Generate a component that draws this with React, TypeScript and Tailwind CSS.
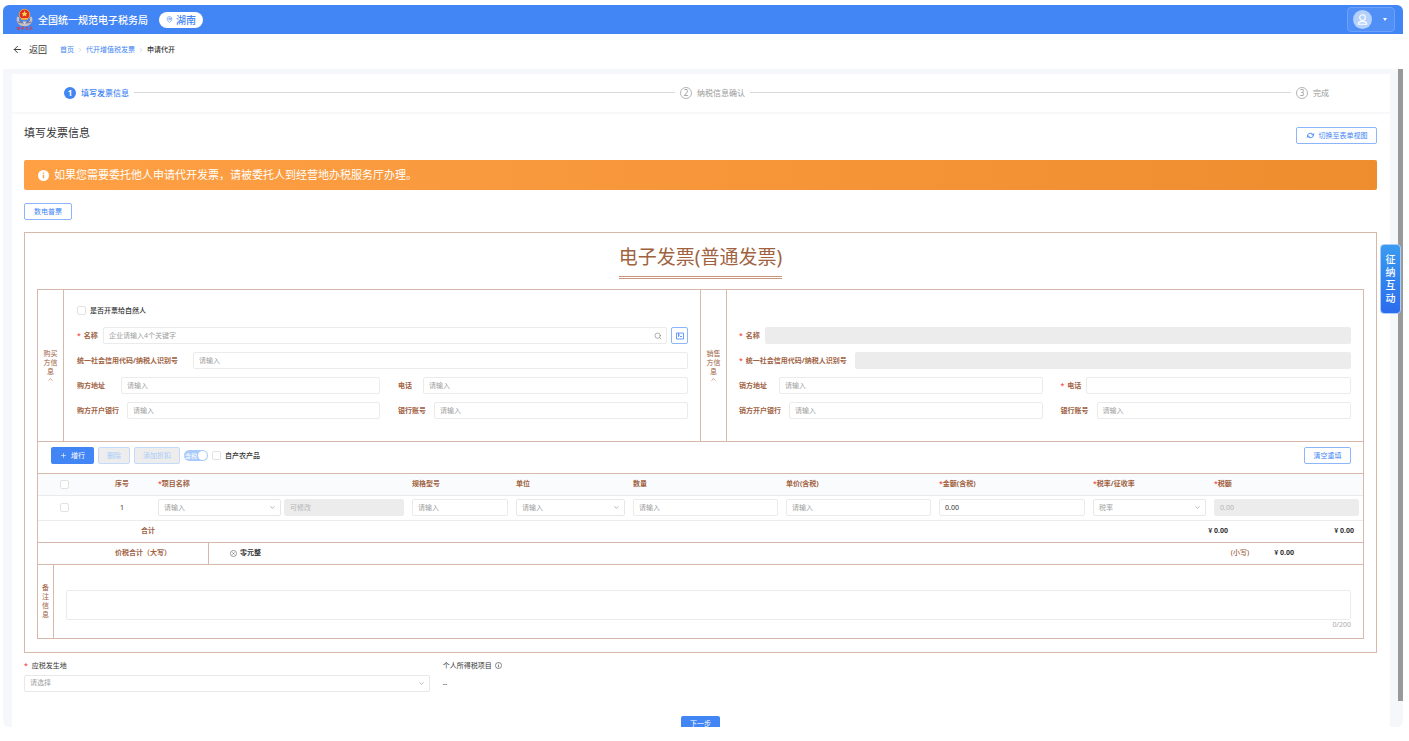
import type { InputHTMLAttributes, ReactNode } from "react";
import { ArrowLeft, ChevronDown, ChevronRight, ChevronUp, MapPin, Plus, Search } from "lucide-react";

const inputBase =
  "h-[17px] min-w-0 rounded-xs border border-[#ebebeb] bg-white px-[5px] font-normal text-[#333] outline-none placeholder:text-[#a0a0a0] disabled:border-[#ececec] disabled:bg-[#ececec] disabled:placeholder:text-[#b5b5b5]";

const outlineButton =
  "flex h-[17px] shrink-0 items-center justify-center rounded-xs border border-[#8db6fa] bg-white text-[#4285f4]";

const disabledButton =
  "flex h-[17px] items-center justify-center rounded-xs border border-[#c5daf8] bg-[#ededed] text-[#a9cbfa]";

function Required() {
  return <span className="font-normal text-[#f5222d]">*</span>;
}

interface FieldProps extends InputHTMLAttributes<HTMLInputElement> {
  label: string;
  labelWidth: string;
  required?: boolean;
  suffix?: ReactNode;
}

function Field({ label, labelWidth, required, suffix, ...rest }: FieldProps) {
  return (
    <div className="flex min-w-0 flex-1 items-center gap-1">
      <label className="relative flex min-w-0 flex-1 items-center">
        <span className={`flex shrink-0 gap-[3px] whitespace-nowrap font-bold text-[#a0623f] ${labelWidth}`}>
          {required && <Required />}
          {label}
        </span>
        <input type="text" className={`${inputBase} flex-1`} {...rest} />
        {suffix && <Search className="absolute right-[5px] size-2 text-[#888]" strokeWidth={2} />}
      </label>
      {suffix}
    </div>
  );
}

function SelectBox({ label, placeholder }: { label: string; placeholder: string }) {
  return (
    <div className="relative flex min-w-0 flex-1 items-center">
      <select
        aria-label={label}
        className="h-[17px] w-full appearance-none rounded-xs border border-[#e8e8e8] bg-white px-[5px] text-[#a0a0a0] outline-none"
      >
        <option>{placeholder}</option>
      </select>
      <ChevronDown className="pointer-events-none absolute right-[5px] size-[7px] text-[#888]" />
    </div>
  );
}

function Checkbox({ label, hideLabel }: { label: string; hideLabel?: boolean }) {
  return (
    <label className="flex items-center gap-1 font-medium text-[#333]">
      <input
        type="checkbox"
        aria-label={label}
        className="size-[9px] shrink-0 appearance-none rounded-xs border border-[#e2e2e2] bg-white checked:bg-[#4285f4]"
      />
      {!hideLabel && label}
    </label>
  );
}

function SideLabel({ text }: { text: string }) {
  return (
    <div className="flex w-[26px] shrink-0 flex-col items-center justify-center text-center text-[#a0623f]">
      <span className="w-[15px] leading-[9px]">{text}</span>
      <ChevronUp className="size-[7px]" />
    </div>
  );
}

function Emblem() {
  return (
    <svg viewBox="0 0 34 46" className="h-[23px] w-[17px]" aria-hidden="true">
      <path d="M5 18c-4 8 2 16 12 16s16-8 12-16" fill="none" stroke="#c9bfc0" strokeWidth="5" />
      <path d="M8 25c4 6 14 6 18 0M3 28l8 2M31 28l-8 2" fill="none" stroke="#7d7484" strokeWidth="2" />
      <circle cx="17" cy="13" r="10.5" fill="#e02d1c" stroke="#f2a13b" strokeWidth="2" />
      <path d="M17 5l2 5h4l-3 3 1 4-4-2-4 2 1-4-3-3h4z" fill="#ffd257" />
      <path d="M10 20h14v3H10z" fill="#f7b23c" />
      <path d="M13 27h8l-4 6z" fill="#e5d6c8" />
      <path
        d="M2 39h6v3H2zM5 37v8M11 38h5M11 41h6M13 38v6M20 38l4 6M24 38l-4 6M27 38h5M29 38v6M27 42h6"
        fill="none"
        stroke="#cf3f4c"
        strokeWidth="1.5"
      />
    </svg>
  );
}

function InfoIcon({ className }: { className: string }) {
  return (
    <svg viewBox="0 0 16 16" className={className} fill="none" stroke="currentColor" aria-hidden="true">
      <circle cx="8" cy="8" r="7" strokeWidth="1.3" />
      <path d="M8 7v5M8 4v1.5" strokeWidth="1.5" />
    </svg>
  );
}

function Header() {
  return (
    <header className="flex h-[29px] shrink-0 items-center bg-[#4285f5] pr-2 pl-[13px] text-white">
      <Emblem />
      <h1 className="ml-[5px] text-[10px] font-medium">全国统一规范电子税务局</h1>
      <button className="ml-[11px] flex h-4 w-11 items-center justify-center gap-[3px] rounded-full bg-white text-[10px] font-medium text-[#4285f4]">
        <MapPin className="size-[7px]" />
        湖南
      </button>
      <button
        aria-label="用户"
        className="ml-auto flex h-[25px] w-12 items-center gap-[11px] rounded-sm border border-[#6ba1f8] bg-[#5090f6] pl-[5px]"
      >
        <svg viewBox="0 0 20 20" className="size-[19px]" aria-hidden="true">
          <circle cx="10" cy="10" r="10" fill="#b4d1fc" />
          <g fill="none" stroke="#fff" strokeWidth="1.2">
            <circle cx="10" cy="8" r="3" />
            <path d="M5.500 15c0-4 9-4 9 0z" />
          </g>
        </svg>
        <svg viewBox="0 0 4 3" className="h-[3px] w-1" aria-hidden="true">
          <path d="M0 0h4L2 3z" fill="#fff" />
        </svg>
      </button>
    </header>
  );
}

function Breadcrumb() {
  return (
    <nav className="flex h-[35px] shrink-0 items-center bg-white pb-1 pl-[9px]">
      <button className="flex items-center gap-[6px] text-[9px] text-[#333]">
        <ArrowLeft className="size-[11px]" />
        返回
      </button>
      <ol className="ml-[13px] flex items-center gap-[3px]">
        <li><a href="#home" className="text-[#4285f4]">首页</a></li>
        <ChevronRight className="size-[6px] text-[#aaa]" />
        <li><a href="#list" className="text-[#4285f4]">代开增值税发票</a></li>
        <ChevronRight className="size-[6px] text-[#aaa]" />
        <li className="font-medium text-[#333]">申请代开</li>
      </ol>
    </nav>
  );
}

function Steps() {
  const line = <div className="h-px flex-1 bg-[#d8d8d8]" />;
  return (
    <ol className="flex h-10 items-center gap-[5px] border-b-2 border-[#f7f8fa] pr-[61px] pb-px pl-[52px] text-[8px] text-[#999]">
      <li className="flex items-center gap-[5px] font-medium text-[#4285f4]">
        <span className="flex size-[12px] items-center justify-center rounded-full bg-[#4285f4] font-bold text-white">1</span>
        填写发票信息
      </li>
      {line}
      <li className="flex items-center gap-[5px]">
        <span className="flex size-[12px] items-center justify-center rounded-full border border-[#b5b5b5]">2</span>
        纳税信息确认
      </li>
      {line}
      <li className="flex items-center gap-[5px]">
        <span className="flex size-[12px] items-center justify-center rounded-full border border-[#b5b5b5]">3</span>
        完成
      </li>
    </ol>
  );
}

function BuyerForm() {
  return (
    <div className="flex min-w-0 flex-1 flex-col gap-2 pt-3 pr-3 pb-[22px] pl-[13px]">
      <div className="flex h-[17px] items-center">
        <Checkbox label="是否开票给自然人" />
      </div>
      <Field
        label="名称"
        labelWidth="w-[26px]"
        required
        placeholder="企业请输入4个关键字"
        suffix={
          <button aria-label="选择企业" className={`${outlineButton} w-[17px]`}>
            <svg viewBox="0 0 16 16" className="size-2" fill="none" stroke="currentColor" strokeWidth="1.6" aria-hidden="true">
              <path d="M1 2h14v12H1zM5 2v8M8 9h4M5 6h3" />
            </svg>
          </button>
        }
      />
      <Field label="统一社会信用代码/纳税人识别号" labelWidth="w-[116px]" placeholder="请输入" />
      <div className="grid grid-cols-[303fr_290fr] gap-[18px]">
        <Field label="购方地址" labelWidth="w-11" placeholder="请输入" />
        <Field label="电话" labelWidth="w-[25px]" placeholder="请输入" />
      </div>
      <div className="grid grid-cols-[303fr_290fr] gap-[18px]">
        <Field label="购方开户银行" labelWidth="w-[50px]" placeholder="请输入" />
        <Field label="银行账号" labelWidth="w-9" placeholder="请输入" />
      </div>
    </div>
  );
}

function SellerForm() {
  return (
    <div className="flex min-w-0 flex-1 flex-col gap-2 px-3 pt-[37px] pb-[22px]">
      <Field label="名称" labelWidth="w-[26px]" required disabled />
      <Field label="统一社会信用代码/纳税人识别号" labelWidth="w-[116px]" required disabled />
      <div className="grid grid-cols-[303fr_290fr] gap-[18px]">
        <Field label="销方地址" labelWidth="w-10" placeholder="请输入" />
        <Field label="电话" labelWidth="w-[25px]" required />
      </div>
      <div className="grid grid-cols-[303fr_290fr] gap-[18px]">
        <Field label="销方开户银行" labelWidth="w-[50px]" placeholder="请输入" />
        <Field label="银行账号" labelWidth="w-9" placeholder="请输入" />
      </div>
    </div>
  );
}

function Toolbar() {
  return (
    <div className="flex items-start border-b border-[#d6b9aa] pt-[5px] pr-3 pb-[9px] pl-[13px]">
      <div className="flex items-center gap-1">
        <button className="flex h-[17px] w-[43px] items-center justify-center gap-1 rounded-xs bg-[#4285f4] text-white">
          <Plus className="size-[7px]" />
          增行
        </button>
        <button disabled className={`${disabledButton} w-8`}>删除</button>
        <button disabled className={`${disabledButton} w-[46px]`}>添加折扣</button>
        <label className="flex h-[11px] w-6 items-center justify-end gap-px rounded-full bg-[#a9cbfa] pr-px text-[6px] text-white">
          <input type="checkbox" role="switch" className="sr-only" defaultChecked disabled />
          <span>含税</span>
          <span className="size-[9px] shrink-0 rounded-full bg-white" />
        </label>
        <Checkbox label="自产农产品" />
      </div>
      <button className={`${outlineButton} ml-auto w-[47px]`}>清空重填</button>
    </div>
  );
}

const columns = [
  { title: "序号", width: "w-[64px]", center: true },
  { title: "项目名称", width: "w-[254px]", required: true },
  { title: "规格型号", width: "w-[104px]" },
  { title: "单位", width: "w-[117px]" },
  { title: "数量", width: "w-[153px]" },
  { title: "单价(含税)", width: "w-[153px]" },
  { title: "金额(含税)", width: "w-[154px]", required: true },
  { title: "税率/征收率", width: "w-[121px]", required: true },
  { title: "税额", width: "w-[153px]", required: true },
];

function ItemsTable() {
  const cell = "px-1";
  return (
    <table className="w-full table-fixed border-collapse">
      <thead>
        <tr className="h-[21px] border-b border-[#ebebeb] bg-[#fafbfd] text-left">
          <th className="w-[52px]">
            <div className="flex justify-center">
              <Checkbox label="全选" hideLabel />
            </div>
          </th>
          {columns.map((c) => (
            <th
              key={c.title}
              className={`px-1 font-bold text-[#a0623f] ${c.width} ${c.center ? "text-center" : ""}`}
            >
              {c.required && <Required />}
              {c.title}
            </th>
          ))}
        </tr>
      </thead>
      <tbody>
        <tr className="h-[25px] border-b border-[#ebebeb]">
          <td>
            <div className="flex justify-center">
              <Checkbox label="选择第1行" hideLabel />
            </div>
          </td>
          <td className="px-1 text-center">1</td>
          <td className={cell}>
            <div className="grid grid-cols-[123fr_120fr] gap-[3px]">
              <SelectBox label="项目名称" placeholder="请输入" />
              <input aria-label="项目别名" className={inputBase} placeholder="可修改" disabled />
            </div>
          </td>
          <td className={cell}>
            <input aria-label="规格型号" className={`${inputBase} block w-full`} placeholder="请输入" />
          </td>
          <td className={cell}>
            <SelectBox label="单位" placeholder="请输入" />
          </td>
          <td className={cell}>
            <input aria-label="数量" className={`${inputBase} block w-full`} placeholder="请输入" />
          </td>
          <td className={cell}>
            <input aria-label="单价(含税)" className={`${inputBase} block w-full`} placeholder="请输入" />
          </td>
          <td className={cell}>
            <input aria-label="金额(含税)" className={`${inputBase} block w-full`} defaultValue="0.00" />
          </td>
          <td className={cell}>
            <SelectBox label="税率/征收率" placeholder="税率" />
          </td>
          <td className={cell}>
            <input aria-label="税额" className={`${inputBase} block w-full`} placeholder="0.00" disabled />
          </td>
        </tr>
      </tbody>
    </table>
  );
}

function Totals() {
  return (
    <>
      <div className="flex h-[22px] items-center border-b border-[#d6b9aa] pr-[9px] font-bold text-[#333]">
        <span className="w-[220px] text-center text-[#a0623f]">合计</span>
        <span className="ml-auto">¥ 0.00</span>
        <span className="w-[126px] text-right">¥ 0.00</span>
      </div>
      <div className="flex h-[22px] items-center border-b border-[#d6b9aa] pr-[69px] font-bold text-[#333]">
        <span className="flex w-[171px] items-center justify-center self-stretch border-r border-[#d6b9aa] pl-10 text-[#a0623f]">
          价税合计（大写）
        </span>
        <span className="ml-[21px] flex items-center gap-[3px]">
          <svg viewBox="0 0 16 16" className="size-[7px]" fill="none" stroke="#666" strokeWidth="1.4" aria-hidden="true">
            <circle cx="8" cy="8" r="7" />
            <path d="M5.500 5.500l5 5M10.500 5.500l-5 5" />
          </svg>
          零元整
        </span>
        <span className="ml-auto font-medium text-[#a0623f]">(小写)</span>
        <span className="ml-[25px]">¥ 0.00</span>
      </div>
    </>
  );
}

function Invoice() {
  return (
    <section className="mt-3 flex flex-col items-stretch border border-[#d6b9aa] px-3 pt-[10px] pb-[13px]">
      <h3 className="mb-[10px] self-center border-b-3 border-double border-[#c9977c] pb-[5px] text-[19px] leading-7 text-[#a0623f]">
        电子发票(普通发票)
      </h3>
      <div className="border border-[#d6b9aa]">
        <div className="flex border-b border-[#d6b9aa]">
          <div className="flex min-w-0 flex-1 divide-x divide-[#d6b9aa] border-r border-[#d6b9aa]">
            <SideLabel text="购买方信息" />
            <BuyerForm />
          </div>
          <div className="flex min-w-0 flex-1 divide-x divide-[#d6b9aa]">
            <SideLabel text="销售方信息" />
            <SellerForm />
          </div>
        </div>
        <Toolbar />
        <ItemsTable />
        <Totals />
        <div className="flex">
          <label
            htmlFor="remark"
            className="flex w-4 shrink-0 items-center justify-center border-r border-[#d6b9aa] text-[#a0623f]"
          >
            <span className="w-[7px] leading-[9px]">备注信息</span>
          </label>
          <div className="flex-1 px-3 pt-[25px] pb-2 text-right text-[#aaa]">
            <textarea
              id="remark"
              className="block h-[30px] w-full resize-none rounded-xs border border-[#ebebeb] p-1 outline-none"
            />
            <div className="leading-[10px]">0/200</div>
          </div>
        </div>
      </div>
    </section>
  );
}

export default function App() {
  return (
    <div className="h-screen overflow-hidden bg-white pt-[5px] pr-[6px] pb-[14px] pl-[3px] font-['Noto_Sans','Noto_Sans_CJK_SC',sans-serif] text-[7px] leading-[10px] text-[#333]">
      <div className="relative flex h-full flex-col overflow-hidden rounded-md">
        <Header />
        <Breadcrumb />
        <div className="flex min-h-0 flex-1 items-start overflow-hidden bg-[#f6f7fa] pl-[9px]">
          <main className="mt-[5px] mr-2 min-w-0 flex-1 bg-white pb-10">
            <Steps />
            <div className="pt-[13px] pr-[13px] pl-3">
              <div className="flex items-start justify-between">
                <h2 className="text-[11px] leading-3">填写发票信息</h2>
                <button className={`${outlineButton} w-[81px] gap-1`}>
                  <svg viewBox="0 0 20 16" className="h-[7px] w-[9px]" fill="none" stroke="currentColor" strokeWidth="2" aria-hidden="true">
                    <path d="M3 9c0-7 11-8 13-3M17 7c0 7-11 8-13 3M18 3l-2 4-4-1M2 13l2-4 4 1" />
                  </svg>
                  切换至表单视图
                </button>
              </div>
              <div className="mt-4 flex h-[30px] items-center gap-[5px] rounded-xs bg-linear-to-r from-[#ffa045] to-[#ee8d2e] pl-[14px] text-[11px] text-white">
                <svg viewBox="0 0 16 16" className="size-[11px]" aria-hidden="true">
                  <circle cx="8" cy="8" r="8" fill="#fff" />
                  <path d="M8 7v5M8 3.500v2" stroke="#fd9d42" strokeWidth="2" />
                </svg>
                如果您需要委托他人申请代开发票，请被委托人到经营地办税服务厅办理。
              </div>
              <button className={`${outlineButton} mt-[13px] w-12`}>数电普票</button>
              <Invoice />
              <div className="mt-2 grid grid-cols-[406fr_935fr] gap-[13px]">
                <label className="flex flex-col gap-1">
                  <span>
                    <Required />
                    <span className="ml-1">应税发生地</span>
                  </span>
                  <SelectBox label="应税发生地" placeholder="请选择" />
                </label>
                <div className="flex flex-col gap-2">
                  <span className="flex items-center gap-[3px]">
                    个人所得税项目
                    <InfoIcon className="size-[7px]" />
                  </span>
                  <span>--</span>
                </div>
              </div>
              <button className="mx-auto mt-6 flex h-[17px] w-[39px] items-center justify-center rounded-xs bg-[#4285f4] text-white">
                下一步
              </button>
            </div>
          </main>
          <div className="h-[96%] w-[5px] shrink-0 bg-[#999]" />
        </div>
        <button className="absolute top-[239px] right-[2px] flex h-[70px] w-[21px] items-center justify-center rounded-sm border border-[#a9ccfa] bg-linear-to-b from-[#3b9bf0] to-[#2c6bed] text-[10px] leading-[13px] font-medium text-white">
          <span className="w-[10px]">征纳互动</span>
        </button>
      </div>
    </div>
  );
}
